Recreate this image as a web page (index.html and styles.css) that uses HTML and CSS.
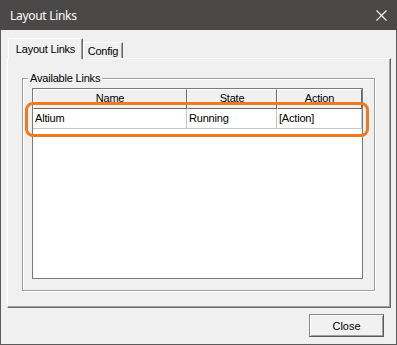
FILE: index.html
```html
<!DOCTYPE html>
<html lang="en">
<head>
    <meta charset="UTF-8">
    <title>Layout Links</title>
    <link rel="stylesheet" href="styles.css">
</head>
<body>
    <div class="window">
        <div class="titlebar">
            <span class="title">Layout Links</span>
            <svg class="close-x" width="11" height="11" viewBox="0 0 11 11">
                <path d="M0.5 0.5L10.5 10.5M10.5 0.5L0.5 10.5" stroke="#fff" stroke-width="1.1" fill="none"/>
            </svg>
        </div>

        <div class="client">
            <div class="tabs">
                <div class="tab active">Layout Links</div>
                <div class="tab">Config</div>
            </div>

            <div class="panel">
                <div class="group">
                    <span class="group-label">Available Links</span>
                    <div class="list">
                        <div class="list-head">
                            <div class="col col-name">Name</div>
                            <div class="col col-state">State</div>
                            <div class="col col-action">Action</div>
                        </div>
                        <div class="list-row">
                            <div class="cell col-name">Altium</div>
                            <div class="cell col-state">Running</div>
                            <div class="cell col-action">[Action]</div>
                        </div>
                    </div>
                </div>
            </div>

            <div class="footer">
                <button type="button" class="btn">Close</button>
            </div>
        </div>

        <!-- callout drawn over the first row -->
        <div class="highlight"></div>
    </div>
</body>
</html>
```

FILE: styles.css
```css
* {
    box-sizing: border-box;
}
body {
    margin: 0;
    background-color: #f0f0f0;
    color: #000;
    font-family: "Liberation Sans", Arial, sans-serif;
    font-size: 11px;
    letter-spacing: -0.2px;
}
.window {
    position: relative;
    width: 397px;
    height: 345px;
    background: #f0f0f0;
    border: 1px solid #5a5a5a;
    border-top: none;
    display: flex;
    flex-direction: column;
}
.titlebar {
    height: 30px;
    margin: 0 -1px;
    padding: 0 10px;
    background: #4a4947;
    color: #fff;
    display: flex;
    align-items: center;
    justify-content: space-between;
    font-family: "Noto Sans", sans-serif;
    font-size: 12px;
    letter-spacing: -0.3px;
}
.client {
    flex: 1;
    padding: 8px 0 0 6px;
}
/* Tabs */
.tabs {
    position: relative;
    z-index: 1;
    display: flex;
    align-items: flex-end;
    height: 20px;
    padding-left: 1px;
}
.tab {
    width: 40px;
    height: 16px;
    background: #f0f0f0;
    border-top: 1px solid #fff;
    border-left: 1px solid #fff;
    border-right: 1px solid #696969;
    box-shadow: inset -1px 0 #a0a0a0;
    display: flex;
    align-items: center;
    justify-content: center;
}
.tab.active {
    width: 75px;
    height: 21px;
    margin-bottom: -1px;
}
.panel {
    width: 384px;
    height: 250px;
    border-top: 1px solid #fff;
    border-left: 1px solid #fff;
    border-right: 1px solid #696969;
    border-bottom: 1px solid #696969;
    box-shadow: inset -1px -1px #a0a0a0;
    padding: 19px 0 0 14px;
}
/* Group box */
.group {
    position: relative;
    width: 353px;
    height: 213px;
    border: 1px solid #a0a0a0;
    box-shadow: inset 1px 1px #fff, 1px 1px #fff;
    padding: 9px 0 0 9px;
}
.group-label {
    position: absolute;
    top: -8px;
    left: 5px;
    padding: 0 2px;
    line-height: 14px;
    background: #f0f0f0;
}
/* List view */
.list {
    width: 331px;
    height: 191px;
    background: #fff;
    border: 1px solid #7a7a7a;
}
.list-head,
.list-row {
    display: flex;
    height: 20px;
}
.col-name {
    width: 154px;
}
.col-state {
    width: 90px;
}
.col-action {
    width: 85px;
}
.list-head .col {
    background: #f0f0f0;
    border-top: 1px solid #fff;
    border-left: 1px solid #fff;
    border-right: 1px solid #696969;
    border-bottom: 1px solid #696969;
    text-align: center;
    line-height: 17px;
}
.list-row {
    border-bottom: 1px solid #c4c4c4;
}
.cell {
    padding-left: 2px;
    line-height: 19px;
    border-right: 1px solid #c4c4c4;
}
/* Footer */
.footer {
    display: flex;
    justify-content: flex-end;
    padding: 6px 12px 0 0;
}
.btn {
    width: 75px;
    height: 23px;
    padding: 0;
    font: inherit;
    color: #000;
    background: #f1f1f1;
    border: 1px solid #8a8a8a;
    border-right-color: #5a5a5a;
    border-bottom-color: #5a5a5a;
    box-shadow: inset 1px 1px #fff, inset -1px -1px #a0a0a0;
}
.highlight {
    position: absolute;
    left: 24px;
    top: 102px;
    width: 344px;
    height: 35px;
    border: 3px solid #ef7b1f;
    border-radius: 8px;
}
```
